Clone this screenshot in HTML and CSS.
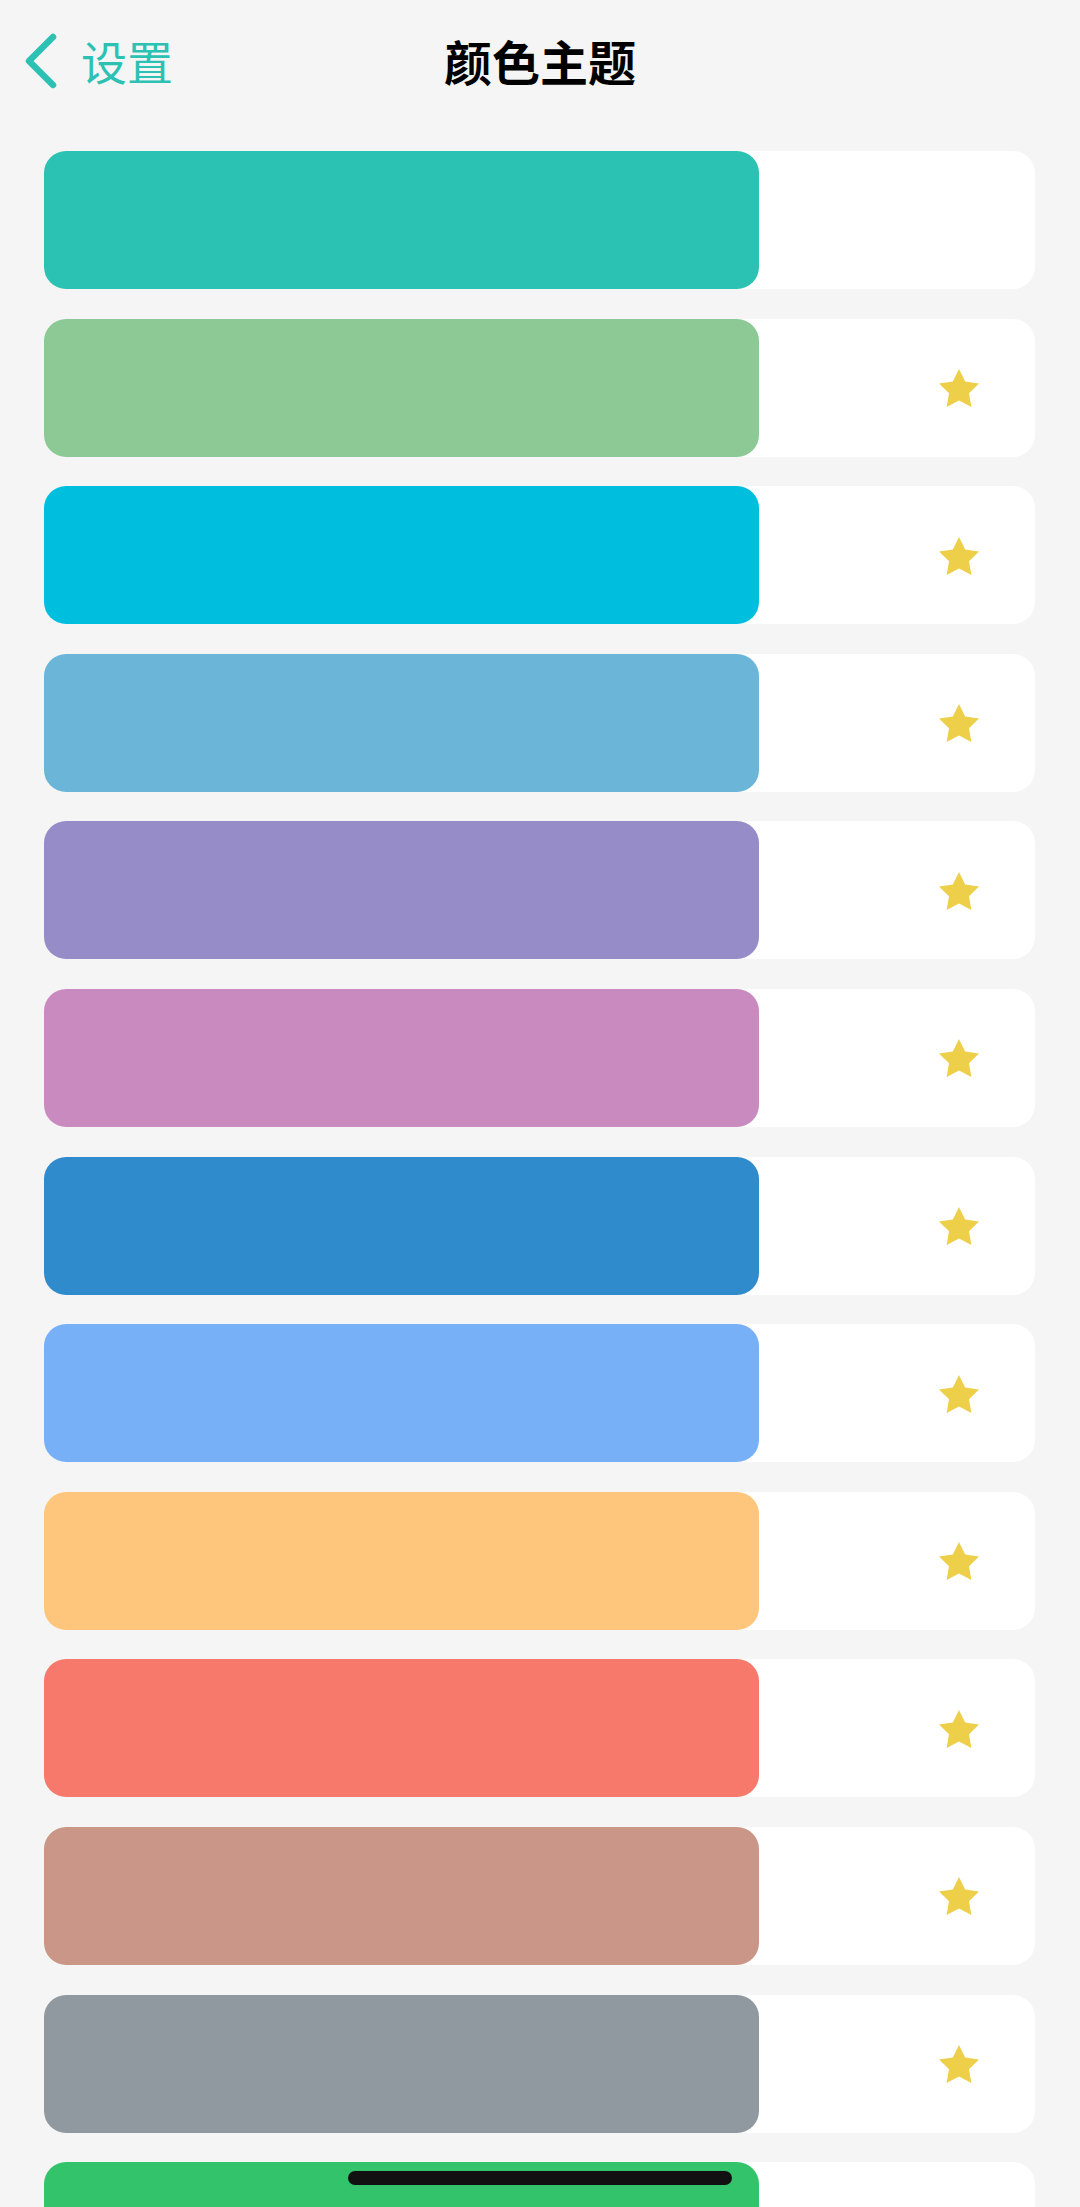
FILE: index.html
```html
<!DOCTYPE html>
<html lang="zh">
<head>
<meta charset="utf-8">
<title>颜色主题</title>
<link rel="stylesheet" href="styles.css">
</head>
<body>
<header class="nav">
  <div class="back">
    <svg class="chev" viewBox="0 0 36 56" width="36" height="56"><polyline points="30,4 6,28 30,52" fill="none" stroke="#2cc1b3" stroke-width="6.5" stroke-linecap="round" stroke-linejoin="round"/></svg>
    <span class="back-text">设置</span>
  </div>
  <h1 class="title">颜色主题</h1>
</header>
<main class="list">
  <div class="row"><div class="swatch c1"></div><div class="mark"></div></div>
  <div class="row"><div class="swatch c2"></div><div class="mark"><svg class="star" viewBox="0 0 24 24"><path d="M12 2l3.09 6.26L22 9.27l-5 4.87 1.18 6.88L12 17.77l-6.18 3.25L7 14.14 2 9.27l6.91-1.01L12 2z"/></svg></div></div>
  <div class="row"><div class="swatch c3"></div><div class="mark"><svg class="star" viewBox="0 0 24 24"><path d="M12 2l3.09 6.26L22 9.27l-5 4.87 1.18 6.88L12 17.77l-6.18 3.25L7 14.14 2 9.27l6.91-1.01L12 2z"/></svg></div></div>
  <div class="row"><div class="swatch c4"></div><div class="mark"><svg class="star" viewBox="0 0 24 24"><path d="M12 2l3.09 6.26L22 9.27l-5 4.87 1.18 6.88L12 17.77l-6.18 3.25L7 14.14 2 9.27l6.91-1.01L12 2z"/></svg></div></div>
  <div class="row"><div class="swatch c5"></div><div class="mark"><svg class="star" viewBox="0 0 24 24"><path d="M12 2l3.09 6.26L22 9.27l-5 4.87 1.18 6.88L12 17.77l-6.18 3.25L7 14.14 2 9.27l6.91-1.01L12 2z"/></svg></div></div>
  <div class="row"><div class="swatch c6"></div><div class="mark"><svg class="star" viewBox="0 0 24 24"><path d="M12 2l3.09 6.26L22 9.27l-5 4.87 1.18 6.88L12 17.77l-6.18 3.25L7 14.14 2 9.27l6.91-1.01L12 2z"/></svg></div></div>
  <div class="row"><div class="swatch c7"></div><div class="mark"><svg class="star" viewBox="0 0 24 24"><path d="M12 2l3.09 6.26L22 9.27l-5 4.87 1.18 6.88L12 17.77l-6.18 3.25L7 14.14 2 9.27l6.91-1.01L12 2z"/></svg></div></div>
  <div class="row"><div class="swatch c8"></div><div class="mark"><svg class="star" viewBox="0 0 24 24"><path d="M12 2l3.09 6.26L22 9.27l-5 4.87 1.18 6.88L12 17.77l-6.18 3.25L7 14.14 2 9.27l6.91-1.01L12 2z"/></svg></div></div>
  <div class="row"><div class="swatch c9"></div><div class="mark"><svg class="star" viewBox="0 0 24 24"><path d="M12 2l3.09 6.26L22 9.27l-5 4.87 1.18 6.88L12 17.77l-6.18 3.25L7 14.14 2 9.27l6.91-1.01L12 2z"/></svg></div></div>
  <div class="row"><div class="swatch c10"></div><div class="mark"><svg class="star" viewBox="0 0 24 24"><path d="M12 2l3.09 6.26L22 9.27l-5 4.87 1.18 6.88L12 17.77l-6.18 3.25L7 14.14 2 9.27l6.91-1.01L12 2z"/></svg></div></div>
  <div class="row"><div class="swatch c11"></div><div class="mark"><svg class="star" viewBox="0 0 24 24"><path d="M12 2l3.09 6.26L22 9.27l-5 4.87 1.18 6.88L12 17.77l-6.18 3.25L7 14.14 2 9.27l6.91-1.01L12 2z"/></svg></div></div>
  <div class="row"><div class="swatch c12"></div><div class="mark"><svg class="star" viewBox="0 0 24 24"><path d="M12 2l3.09 6.26L22 9.27l-5 4.87 1.18 6.88L12 17.77l-6.18 3.25L7 14.14 2 9.27l6.91-1.01L12 2z"/></svg></div></div>
  <div class="row"><div class="swatch c13"></div><div class="mark"><svg class="star" viewBox="0 0 24 24"><path d="M12 2l3.09 6.26L22 9.27l-5 4.87 1.18 6.88L12 17.77l-6.18 3.25L7 14.14 2 9.27l6.91-1.01L12 2z"/></svg></div></div>
</main>
<div class="home-indicator"></div>
</body>
</html>
```

FILE: styles.css
```css
html, body {
  margin: 0;
  padding: 0;
}
body {
  background: #f5f5f5;
  font-family: "Noto Sans CJK SC", "Noto Sans", sans-serif;
  width: 1080px;
  height: 2207px;
  overflow: hidden;
}
.nav {
  height: 120px;
  position: relative;
  display: flex;
  align-items: center;
  justify-content: center;
}
.back {
  position: absolute;
  left: 23px;
  top: 0;
  height: 120px;
  display: flex;
  align-items: center;
  gap: 22px;
}
.chev {
  display: block;
  margin-top: 1px;
}
.back-text {
  color: #2cc1b3;
  font-size: 46px;
  font-weight: 400;
  line-height: 1;
}
.title {
  margin: 0;
  font-size: 48px;
  font-weight: 700;
  color: #000;
  line-height: 1;
}
.list {
  padding: 31px 45px 0 44px;
  display: flex;
  flex-direction: column;
  gap: 29.6px;
}
.row {
  height: 138px;
  background: #fff;
  border-radius: 22px;
  display: flex;
  flex-shrink: 0;
}
.swatch {
  width: 715px;
  height: 100%;
  border-radius: 22px;
}
.mark {
  flex: 1;
  display: flex;
  align-items: center;
  justify-content: flex-end;
  padding-right: 52px;
}
.star {
  width: 48px;
  height: 48px;
  fill: #eecf4a;
  margin-top: 3px;
}
.c1 { background: #2bc2b3; }
.c2 { background: #8cc995; }
.c3 { background: #00bfde; }
.c4 { background: #6bb5d9; }
.c5 { background: #968cc8; }
.c6 { background: #c98bbf; }
.c7 { background: #2f8bcc; }
.c8 { background: #77b0f7; }
.c9 { background: #fec67c; }
.c10 { background: #f6796b; }
.c11 { background: #c99688; }
.c12 { background: #9098a0; }
.c13 { background: #33c46b; }
.home-indicator {
  position: fixed;
  left: 348px;
  bottom: 22px;
  width: 384px;
  height: 14px;
  border-radius: 7px;
  background: #111;
}
```
